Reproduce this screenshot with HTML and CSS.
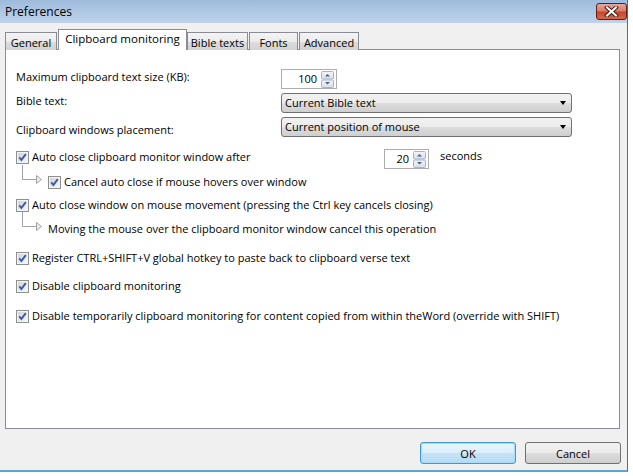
FILE: index.html
```html
<!DOCTYPE html>
<html lang="en">
<head>
    <meta charset="UTF-8">
    <title>Preferences</title>
    <link rel="stylesheet" href="styles.css">
</head>
<body>

    <svg class="defs" width="0" height="0">
        <defs>
            <linearGradient id="cbFill" x1="0" y1="0" x2="1" y2="1">
                <stop offset="0" stop-color="#cfd3d9"/>
                <stop offset="1" stop-color="#f7f7f8"/>
            </linearGradient>
            <linearGradient id="spinFill" x1="0" y1="0" x2="0" y2="1">
                <stop offset="0" stop-color="#f3f6fa"/>
                <stop offset="1" stop-color="#d6dfea"/>
            </linearGradient>
            <symbol id="checkbox" viewBox="0 0 13 13">
                <rect x="0.5" y="0.5" width="12" height="12" fill="#f4f4f4" stroke="#8e8f8f"/>
                <rect x="2" y="2" width="9" height="9" fill="url(#cbFill)"/>
                <path d="M3.2 6.4 L5.4 8.9 L9.8 3.2" fill="none" stroke="#3d5aa5" stroke-width="1.9"/>
            </symbol>
            <symbol id="spin" viewBox="0 0 13 17">
                <rect x="0.5" y="0.5" width="12" height="7.5" rx="1" fill="url(#spinFill)" stroke="#a8b4c4"/>
                <rect x="0.5" y="9" width="12" height="7.5" rx="1" fill="url(#spinFill)" stroke="#a8b4c4"/>
                <path d="M4 5.5 L6.5 3 L9 5.5 Z" fill="#4d6185"/>
                <path d="M4 11 L6.5 13.5 L9 11 Z" fill="#4d6185"/>
            </symbol>
            <symbol id="branch" viewBox="0 0 26 24">
                <path d="M6.5 0 V14.5 H20" fill="none" stroke="#a3a3a3"/>
                <path d="M20.5 10.5 L25.5 14.5 L20.5 18.5 Z" fill="#ececec" stroke="#a3a3a3"/>
            </symbol>
        </defs>
    </svg>

    <div class="window">

        <div class="titlebar">
            <span class="title">Preferences</span>
            <span class="close-btn">
                <svg width="15" height="11" viewBox="0 0 15 11">
                    <path d="M3 1.5 L12 9.5 M12 1.5 L3 9.5" stroke="#4a1a12" stroke-width="4" stroke-linecap="square"/>
                    <path d="M3 1.5 L12 9.5 M12 1.5 L3 9.5" stroke="#ffffff" stroke-width="2" stroke-linecap="square"/>
                </svg>
            </span>
        </div>

        <div class="tabs">
            <div class="tab tab-general">General</div>
            <div class="tab active">Clipboard monitoring</div>
            <div class="tab tab-bible">Bible texts</div>
            <div class="tab tab-fonts">Fonts</div>
            <div class="tab tab-advanced">Advanced</div>
        </div>

        <div class="panel">

            <div class="row row-size">
                <span class="label">Maximum clipboard text size (KB):</span>
                <div class="spinbox spin-wide">
                    <span class="spin-value">100</span>
                    <svg class="spin-btns" width="13" height="17"><use href="#spin"/></svg>
                </div>
            </div>

            <div class="row row-bible">
                <span class="label">Bible text:</span>
                <div class="combo"><span>Current Bible text</span><i class="combo-arrow"></i></div>
            </div>

            <div class="row row-place">
                <span class="label label-low">Clipboard windows placement:</span>
                <div class="combo"><span>Current position of mouse</span><i class="combo-arrow"></i></div>
            </div>

            <div class="row row-auto">
                <label class="check check-wide">
                    <svg class="cb" width="13" height="13"><use href="#checkbox"/></svg>
                    Auto close clipboard monitor window after
                </label>
                <div class="spinbox spin-small">
                    <span class="spin-value">20</span>
                    <svg class="spin-btns" width="13" height="17"><use href="#spin"/></svg>
                </div>
                <span class="unit">seconds</span>
            </div>

            <div class="row row-cancel">
                <svg class="branch" width="26" height="24"><use href="#branch"/></svg>
                <label class="check">
                    <svg class="cb" width="13" height="13"><use href="#checkbox"/></svg>
                    Cancel auto close if mouse hovers over window
                </label>
            </div>

            <div class="row row-mouse">
                <label class="check">
                    <svg class="cb" width="13" height="13"><use href="#checkbox"/></svg>
                    Auto close window on mouse movement (pressing the Ctrl key cancels closing)
                </label>
            </div>

            <div class="row row-moving">
                <svg class="branch" width="26" height="24"><use href="#branch"/></svg>
                <span class="note">Moving the mouse over the clipboard monitor window cancel this operation</span>
            </div>

            <div class="row row-register">
                <label class="check">
                    <svg class="cb" width="13" height="13"><use href="#checkbox"/></svg>
                    Register CTRL+SHIFT+V global hotkey to paste back to clipboard verse text
                </label>
            </div>

            <div class="row row-disable">
                <label class="check">
                    <svg class="cb" width="13" height="13"><use href="#checkbox"/></svg>
                    Disable clipboard monitoring
                </label>
            </div>

            <div class="row row-temp">
                <label class="check">
                    <svg class="cb" width="13" height="13"><use href="#checkbox"/></svg>
                    Disable temporarily clipboard monitoring for content copied from within theWord (override with SHIFT)
                </label>
            </div>

        </div>

        <div class="buttons">
            <button class="btn btn-default">OK</button>
            <button class="btn">Cancel</button>
        </div>

    </div>

</body>
</html>
```
FILE: styles.css
```css
body {
    margin: 0;
    padding: 0;
    background-color: #ffffff;
    font-family: "Open Sans", sans-serif;
    font-size: 11px;
    color: #000;
}

.defs {
    position: absolute;
}

.window {
    width: 628px;
    height: 472px;
    background-color: #f0f0f0;
    border-right: 1px solid #4d6f96;
    border-bottom: 2px solid #4fa9dc;
    box-sizing: border-box;
}

/* title bar */
.titlebar {
    height: 23px;
    background: linear-gradient(#9fbbdc, #bfd3ea);
    display: flex;
    align-items: flex-start;
    justify-content: space-between;
    padding-left: 5px;
}

.title {
    font-size: 12px;
    line-height: 23px;
}

.close-btn {
    width: 31px;
    height: 17px;
    margin-top: 3px;
    box-sizing: border-box;
    border: 1px solid #5e1f16;
    border-radius: 3px;
    background: linear-gradient(#e9a898 0%, #d87c66 45%, #c4472d 55%, #d06a4d 100%);
    display: flex;
    align-items: center;
    justify-content: center;
}

/* tabs */
.tabs {
    display: flex;
    align-items: flex-end;
    height: 21px;
    margin-top: 6px;
    padding-left: 5px;
    margin-bottom: -1px;
    position: relative;
    z-index: 1;
}

.tab {
    height: 18px;
    box-sizing: border-box;
    border: 1px solid #898c95;
    border-bottom: none;
    background: linear-gradient(#f4f4f4 0%, #ebebeb 50%, #dddddd 51%, #d2d2d2 100%);
    text-align: center;
    line-height: 17px;
    padding-top: 1px;
}

.tab-general { width: 52px; }
.tab-bible { width: 61px; }
.tab-fonts { width: 49px; margin-left: 1px; }
.tab-advanced { width: 60px; margin-left: 1px; }

.tab.active {
    width: 129px;
    height: 21px;
    background: #ffffff;
    font-size: 11.5px;
    line-height: 16px;
    margin-left: 1px;
}

/* panel */
.panel {
    width: 615px;
    height: 380px;
    margin-left: 5px;
    box-sizing: border-box;
    border: 1px solid #898c95;
    background-color: #ffffff;
    padding-left: 10px;
    padding-top: 19px;
}

.row {
    display: flex;
    align-items: flex-start;
}

.label {
    width: 265px;
    line-height: 16px;
}

.label-low {
    padding-top: 5px;
}

.row-size { height: 20px; }
.row-bible { height: 20px; margin-top: 4px; }
.row-place { height: 20px; margin-top: 4px; }
.row-auto { height: 20px; margin-top: 12px; }
.row-cancel { height: 14px; margin-top: 6px; }
.row-mouse { height: 14px; margin-top: 9px; }
.row-moving { height: 16px; margin-top: 9px; }
.row-register { height: 14px; margin-top: 14px; }
.row-disable { height: 14px; margin-top: 14px; }
.row-temp { height: 14px; margin-top: 16px; }

/* spin edit */
.spinbox {
    height: 20px;
    box-sizing: border-box;
    border: 1px solid #abadb3;
    background: #fff;
    display: flex;
    align-items: center;
    justify-content: flex-end;
    padding-right: 2px;
}

.spin-wide { width: 56px; }
.spin-small { width: 45px; }

.spin-value {
    padding-right: 4px;
    line-height: 16px;
}

.spin-btns {
    display: block;
}

/* combo box */
.combo {
    width: 291px;
    height: 20px;
    box-sizing: border-box;
    border: 1px solid #707070;
    border-radius: 3px;
    background: linear-gradient(#f2f2f2 0%, #ebebeb 50%, #dddddd 51%, #cfcfcf 100%);
    display: flex;
    align-items: center;
    justify-content: space-between;
    padding-left: 3px;
    padding-right: 5px;
    line-height: 16px;
}

.combo-arrow {
    width: 0;
    height: 0;
    border-left: 3.5px solid transparent;
    border-right: 3.5px solid transparent;
    border-top: 4px solid #000;
}

/* check boxes */
.check {
    display: flex;
    align-items: center;
    height: 14px;
    line-height: 14px;
    white-space: nowrap;
}

.check .cb {
    display: block;
    margin-right: 3px;
    flex-shrink: 0;
}

.check-wide {
    width: 368px;
    margin-top: 1px;
}

.unit {
    margin-left: 11px;
    line-height: 14px;
}

.branch {
    display: block;
    flex-shrink: 0;
    margin-right: 6px;
}

.row-cancel .branch {
    margin-top: -10px;
}

.row-moving .branch {
    margin-top: -9px;
}

.note {
    line-height: 16px;
}

/* dialog buttons */
.buttons {
    display: flex;
    justify-content: flex-end;
    gap: 9px;
    margin-top: 13px;
    padding-right: 6px;
}

.btn {
    width: 96px;
    height: 22px;
    border: 1px solid #707070;
    border-radius: 3px;
    background: linear-gradient(#f2f2f2 0%, #ebebeb 50%, #dddddd 51%, #cfcfcf 100%);
    font-family: "Open Sans", sans-serif;
    font-size: 11px;
    color: #000;
    padding: 0;
}

.btn-default {
    border-color: #3c9ad4;
    background: linear-gradient(#eaf5fc 0%, #d9eefb 50%, #c4e3f7 51%, #b6dbf3 100%);
    box-shadow: inset 0 0 0 1px #a6dcf7;
}
```
